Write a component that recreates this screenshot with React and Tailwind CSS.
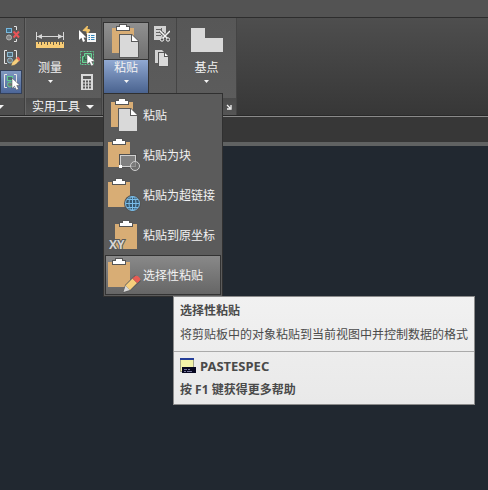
import React from "react";

const FONT = "font-['Noto_Sans','Noto_Sans_CJK_SC',sans-serif]";

function Caret({ wide }) {
  return wide ? (
    <svg width="8" height="4" viewBox="0 0 8 4" aria-hidden="true">
      <path d="M0 0H8L4 4Z" fill="#f4f4f4" />
    </svg>
  ) : (
    <svg width="5" height="3" viewBox="0 0 5 3" aria-hidden="true">
      <path d="M0 0H5L2.500 3Z" fill="#f4f4f4" />
    </svg>
  );
}

function Board({ x, y }) {
  return (
    <g transform={`translate(${x} ${y})`}>
      <rect width="22" height="25" fill="#d8ad75" />
      <path d="M4 3V-2H7V-4H15V-2H18V3Z" fill="#555" />
      <path d="M5 2V-1H8V-3H14V-1H17V2Z" fill="#fff" />
    </g>
  );
}

function Paper({ x, y }) {
  return (
    <g transform={`translate(${x} ${y})`}>
      <path d="M-1-1H12L19 6V23H-1Z" fill="#5a5a5a" />
      <path d="M0 0H11V7H18V22H0Z" fill="#d9d9d9" />
      <path d="M12 0L18 6H12Z" fill="#fff" />
    </g>
  );
}

function PasteIcon() {
  return (
    <svg width="36" height="36" viewBox="0 0 36 36" aria-hidden="true">
      <Board x={4} y={5} />
      <Paper x={12} y={12} />
    </svg>
  );
}

function PasteBlockIcon() {
  return (
    <svg width="36" height="36" viewBox="0 0 36 36" aria-hidden="true">
      <Board x={1} y={5} />
      <rect x="13.500" y="18.500" width="15" height="11" fill="#7c7c7c" stroke="#505050" strokeWidth="3" />
      <rect x="13.500" y="18.500" width="15" height="11" fill="#808080" stroke="#d0d0d0" />
      <rect x="12" y="28" width="3" height="3" fill="#fff" />
      <circle cx="28" cy="29" r="4.500" fill="#777" fillOpacity=".7" stroke="#cfcfcf" />
    </svg>
  );
}

function PasteLinkIcon() {
  return (
    <svg width="36" height="36" viewBox="0 0 36 36" aria-hidden="true">
      <Board x={1} y={5} />
      <circle cx="25.500" cy="26.500" r="8.500" fill="#555" />
      <g fill="none" stroke="#79bce8">
        <circle cx="25.500" cy="26.500" r="7" fill="#35566d" />
        <ellipse cx="25.500" cy="26.500" rx="3.500" ry="7" />
        <path d="M25.500 19.500V33.500M18.500 26.500H32.500M20 22.500H31M20 30.500H31" />
      </g>
    </svg>
  );
}

function PasteCoordsIcon() {
  return (
    <svg width="36" height="36" viewBox="0 0 36 36" aria-hidden="true">
      <Board x={8} y={7} />
      <text
        x="2"
        y="32"
        fontSize="12"
        fontWeight="700"
        fontFamily="Open Sans, sans-serif"
        fill="#d6d6d6"
        stroke="#595959"
        strokeWidth="2"
        paintOrder="stroke"
      >
        XY
      </text>
    </svg>
  );
}

function PasteSpecialIcon() {
  return (
    <svg width="36" height="36" viewBox="0 0 36 36" aria-hidden="true">
      <Board x={1} y={5} />
      <path d="M16 36L18 28L28 18L34 24L23 34Z" fill="#5c5c5c" />
      <path d="M16.500 35L18.500 28.500L23 33Z" fill="#d8d8d8" />
      <path d="M18.500 28.500L25.500 21.500L30 26L23 33Z" fill="#f6ce7b" />
      <path d="M26 21.500L28 19.500Q30 18.500 32 20.500T32 24L30 25.500Z" fill="#e85c54" stroke="#e85c54" />
    </svg>
  );
}

function Cursor({ x, y }) {
  return (
    <path
      transform={`translate(${x} ${y})`}
      d="M0 0V10.500L2.500 8.200L4.500 12L6.500 11L4.700 7.500H8Z"
      fill="#fff"
      stroke="#4b4b4b"
      strokeWidth=".5"
    />
  );
}

function Attributes({ color }) {
  return (
    <>
      <path d="M5 1.500H2.500V14.500H5M12 1.500H14.500V14.500H12" fill="none" stroke="#e4e4e4" />
      <rect x="5.500" y="3.500" width="5" height="4" fill="#506b7a" stroke={color} />
      <circle cx="8" cy="11.500" r="2.500" fill="#777" stroke={color} />
    </>
  );
}

function DetachIcon() {
  return (
    <svg width="18" height="18" viewBox="0 0 18 18" aria-hidden="true">
      <rect x="4.500" y="3.500" width="5" height="4" fill="#3f6c86" stroke="#79b9df" />
      <circle cx="7" cy="12.500" r="2.500" fill="#858585" stroke="#b5b5b5" />
      <path d="M12 1.500H14.500V5M14.500 14V16.500H12" fill="none" stroke="#e4e4e4" />
      <path d="M11.500 6.500L17 12.500M17 6.500L11.500 12.500" stroke="#e95458" strokeWidth="2" />
    </svg>
  );
}

function EditAttributesIcon() {
  return (
    <svg width="18" height="18" viewBox="0 0 18 18" aria-hidden="true">
      <Attributes color="#8fbad1" />
      <path d="M9 17L10 13.500L15 8.500L18 11.500L13 16Z" fill="#f6ce7b" stroke="#555" strokeWidth=".5" />
      <path d="M14.500 9L16 7.500L18 9.500V11.500L17 12Z" fill="#e85c54" />
    </svg>
  );
}

function SelectAttributesIcon() {
  return (
    <svg width="18" height="18" viewBox="0 0 18 18" aria-hidden="true">
      <Attributes color="#5fca91" />
      <Cursor x={10} y={5} />
    </svg>
  );
}

function RulerIcon() {
  return (
    <svg width="30" height="18" viewBox="0 0 30 18" aria-hidden="true">
      <path d="M1.500 1V9M28.500 1V9M2 5.500H28" stroke="#d6d6d6" fill="none" />
      <path d="M2 5.500L7 3V8ZM28 5.500L23 3V8Z" fill="#d6d6d6" />
      <rect x="1" y="11" width="28" height="6" fill="#f8cc75" />
      <path
        d="M3.500 11V13M6.500 11V14M9.500 11V13M12.500 11V14M15.500 11V13M18.500 11V14M21.500 11V13M24.500 11V14M27.500 11V13"
        stroke="#645b48"
      />
    </svg>
  );
}

function QuickSelectIcon() {
  return (
    <svg width="18" height="18" viewBox="0 0 18 18" aria-hidden="true">
      <path d="M9.500 1L8.800 4L12 5L9 9L9 6L5 5.500Z" fill="#f6c668" stroke="#f6c668" />
      <path d="M1 5V15L3.500 12.800L5 17L7 16L5.500 12.500H8.500Z" fill="#fff" />
      <rect x="9" y="8" width="9" height="9" fill="#f5f5f5" />
      <path d="M10.500 10.500H12M13 10.500H16.500M10.500 12.500H12M13 12.500H16.500M10.500 14.500H12M13 14.500H16.500" stroke="#3184b8" />
    </svg>
  );
}

function SelectAllIcon() {
  return (
    <svg width="18" height="18" viewBox="0 0 18 18" aria-hidden="true">
      <rect x="2.500" y="2.500" width="13" height="13" fill="none" stroke="#62c890" strokeDasharray="2 1" />
      <path d="M6.500 4.500H13.500V10.500H10.500V13.500H4.500V7.500H6.500Z" fill="#4d8a67" stroke="#6bd397" />
      <path d="M6.500 7.500V10.500H10.500" fill="none" stroke="#315c45" />
      <Cursor x={9} y={5} />
    </svg>
  );
}

function CalculatorIcon() {
  return (
    <svg width="18" height="18" viewBox="0 0 18 18" aria-hidden="true">
      <rect x="3" y="1" width="12" height="16" fill="#d9d9d9" />
      <rect x="5" y="3" width="8" height="3" fill="#595959" />
      <path d="M5 8.500H13M5 11.500H13M5 14.500H13" stroke="#595959" strokeWidth="2" strokeDasharray="2 1" />
    </svg>
  );
}

function CutIcon() {
  return (
    <svg width="18" height="18" viewBox="0 0 18 18" aria-hidden="true">
      <path d="M2 1H14V9L10 15H2Z" fill="#d2d2d2" />
      <path d="M4 4.500H9M4 7.500H12M4 10.500H9M9.500 3V10" stroke="#656565" />
      <path d="M8 6L16 14M18 6L10 14" stroke="#555" strokeWidth="3" />
      <path d="M8 6L16 14M18 6L10 14" stroke="#f5f5f5" strokeWidth="1.500" />
      <circle cx="10" cy="14.500" r="1.700" fill="#555" stroke="#f5f5f5" />
      <circle cx="16" cy="14.500" r="1.700" fill="#555" stroke="#f5f5f5" />
    </svg>
  );
}

function CopyIcon() {
  return (
    <svg width="18" height="18" viewBox="0 0 18 18" aria-hidden="true">
      <path d="M3 1H10L12 3V14H3Z" fill="#d2d2d2" />
      <path d="M6 3H12L17 8V18H6Z" fill="#555" />
      <path d="M7 4H12V8H16V17H7Z" fill="#d9d9d9" />
      <path d="M13 4L16 7H13Z" fill="#fff" />
    </svg>
  );
}

function LauncherIcon() {
  return (
    <svg width="6" height="6" viewBox="0 0 6 6" aria-hidden="true">
      <path d="M1 1L4 4M5 1V5H1" fill="none" stroke="#f5f5f5" strokeWidth="1.300" />
    </svg>
  );
}

function CommandIcon() {
  return (
    <svg width="16" height="16" viewBox="0 0 16 16" aria-hidden="true">
      <rect width="14" height="14" fill="#a5a58a" />
      <rect x="1" y="2" width="12" height="11" fill="#f3f3a8" />
      <rect width="14" height="2" fill="#243e98" />
      <rect x="2" y="9" width="14" height="6" fill="#080820" />
      <path d="M4 11.500H7M8 11.500H10M4 13.500H6M7 13.500H12" stroke="#77779c" />
    </svg>
  );
}

function SmallButton({ label, active, children }) {
  return (
    <button
      type="button"
      aria-label={label}
      className={
        active
          ? "flex h-6 w-full items-center justify-center border border-[#33405a] bg-linear-to-b from-[#8098c0] to-[#4c6699]"
          : "flex h-6 w-full items-center justify-center"
      }
    >
      {children}
    </button>
  );
}

function LargeButton({ label, icon }) {
  return (
    <button type="button" className="flex flex-col items-center">
      <span className="flex h-9 items-center justify-center">{icon}</span>
      <span className="mt-0.5 leading-4">{label}</span>
      <span className="mt-1 flex">
        <Caret />
      </span>
    </button>
  );
}

function Panel({ className, title, children }) {
  return (
    <section
      className={`flex shrink-0 flex-col border-r border-[#444] bg-linear-to-b from-[#575757] to-[#5d5d5d] ${className}`}
    >
      <div className="flex h-20 items-start px-1 pt-1">{children}</div>
      <div className="flex h-[17px] items-center bg-linear-to-b from-[#4a4a4a] to-[#555]">{title}</div>
    </section>
  );
}

const MENU = [
  { label: "粘贴", Icon: PasteIcon },
  { label: "粘贴为块", Icon: PasteBlockIcon },
  { label: "粘贴为超链接", Icon: PasteLinkIcon },
  { label: "粘贴到原坐标", Icon: PasteCoordsIcon },
  { label: "选择性粘贴", Icon: PasteSpecialIcon, active: true },
];

function Tooltip() {
  return (
    <div
      role="tooltip"
      className="absolute top-full left-[69px] z-20 w-[302px] border border-[#8b8b8b] bg-linear-to-b from-[#f1f1f1] to-[#e9e9e9] text-[#4a4a4a]"
    >
      <div className="px-1.5 pt-1.5 pb-2">
        <p className="leading-4 font-bold">选择性粘贴</p>
        <p className="mt-2 leading-4 whitespace-nowrap">将剪贴板中的对象粘贴到当前视图中并控制数据的格式</p>
      </div>
      <div className="border-t border-[#aaa] px-1.5 py-1.5 font-bold">
        <p className="flex items-center gap-1 text-[13px] leading-4">
          <CommandIcon />
          PASTESPEC
        </p>
        <p className="mt-2 leading-4">按 F1 键获得更多帮助</p>
      </div>
    </div>
  );
}

function PasteMenu() {
  return (
    <div className="absolute top-full left-0 z-10 w-[120px] border border-[#303030] bg-[#5b5b5b] p-px">
      <ul role="menu">
        {MENU.map(({ label, Icon, active }) => (
          <li key={label} role="none">
            <button
              type="button"
              role="menuitem"
              className={
                active
                  ? "flex h-10 w-full items-center border border-[#333] bg-linear-to-b from-[#898989] to-[#666] pl-px whitespace-nowrap"
                  : "flex h-10 w-full items-center border border-transparent pl-px whitespace-nowrap"
              }
            >
              <Icon />
              <span className="pt-0.5">{label}</span>
            </button>
          </li>
        ))}
      </ul>
      <Tooltip />
    </div>
  );
}

export default function App() {
  return (
    <div className={`flex min-h-screen flex-col overflow-hidden bg-[#212830] text-[12px] text-[#f2f2f2] ${FONT}`}>
      <header className="h-[18px] border-b border-[#2d2d2d] bg-[#535353]" />
      <div className="flex border-b border-[#292929] bg-linear-to-b from-[#4e4e4e] to-[#373737]">
        <section className="flex w-[25px] shrink-0 flex-col border-r border-[#404040] bg-linear-to-b from-[#575757] to-[#5d5d5d]">
          <div className="h-20 pt-1 pr-0.5">
            <SmallButton label="删除属性"><DetachIcon /></SmallButton>
            <SmallButton label="编辑属性"><EditAttributesIcon /></SmallButton>
            <SmallButton label="选择属性" active><SelectAttributesIcon /></SmallButton>
          </div>
          <button type="button" aria-label="展开面板" className="flex h-[17px] items-center bg-[#4e4e4e]">
            <svg width="4" height="4" viewBox="0 0 4 4" aria-hidden="true">
              <path d="M0 0H4L0 4Z" fill="#f4f4f4" />
            </svg>
          </button>
        </section>
        <Panel
          className="w-[77px] border-l border-l-[#666]"
          title={
            <button type="button" className="flex items-center gap-1.5 pl-1.5 leading-4">
              实用工具
              <Caret wide />
            </button>
          }
        >
          <div className="mr-2 flex w-10 shrink-0 justify-center">
            <LargeButton label="测量" icon={<RulerIcon />} />
          </div>
          <div className="flex w-[18px] shrink-0 flex-col">
            <SmallButton label="快速选择"><QuickSelectIcon /></SmallButton>
            <SmallButton label="全部选择"><SelectAllIcon /></SmallButton>
            <SmallButton label="快速计算器"><CalculatorIcon /></SmallButton>
          </div>
        </Panel>
        <section className="flex w-[75px] shrink-0 flex-col border-r border-[#444] bg-linear-to-b from-[#575757] to-[#5d5d5d]">
          <div className="flex gap-[3px] pt-1 pl-px">
            <div className="relative w-[46px]">
              <div className="border border-b-0 border-[#333]">
                <button
                  type="button"
                  aria-label="粘贴"
                  className="flex h-[37px] w-full items-center justify-center border-b border-[#333] bg-linear-to-b from-[#909090] to-[#707070]"
                >
                  <PasteIcon />
                </button>
                <button
                  type="button"
                  aria-expanded="true"
                  className="flex h-[33px] w-full flex-col items-center bg-linear-to-b from-[#91a9d2] to-[#4a638f]"
                >
                  <span className="leading-4">粘贴</span>
                  <span className="mt-1 flex">
                    <Caret />
                  </span>
                </button>
              </div>
              <PasteMenu />
            </div>
            <div className="w-[18px]">
              <SmallButton label="剪切"><CutIcon /></SmallButton>
              <SmallButton label="复制"><CopyIcon /></SmallButton>
            </div>
          </div>
        </section>
        <Panel
          className="w-[60px]"
          title={
            <button type="button" aria-label="面板选项" className="ml-auto pr-1">
              <LauncherIcon />
            </button>
          }
        >
          <div className="flex w-full justify-center">
            <LargeButton
              label="基点"
              icon={
                <svg width="32" height="24" viewBox="0 0 32 24" aria-hidden="true">
                  <path d="M0 0H14V10H32V24H0Z" fill="#d9d9d9" />
                </svg>
              }
            />
          </div>
        </Panel>
      </div>
      <div className="h-[30px] border-t border-b-4 border-t-[#8a8a8a] border-b-[#606262] bg-[#373737]" />
      <main className="flex-1 bg-[#212830]" aria-label="绘图区" />
    </div>
  );
}
